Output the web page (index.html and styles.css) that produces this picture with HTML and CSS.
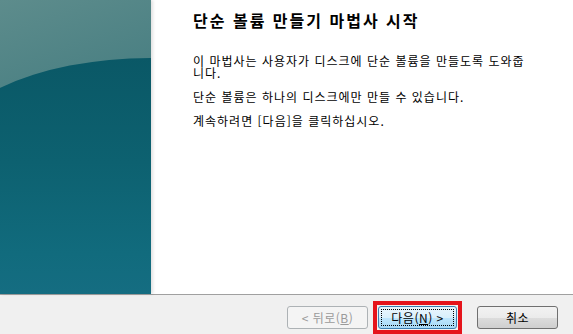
FILE: index.html
```html
<!DOCTYPE html>
<html lang="ko">
<head>
  <meta charset="UTF-8">
  <title>단순 볼륨 만들기 마법사</title>
  <link rel="stylesheet" href="styles.css">
</head>
<body>
  <div class="wizard">
    <div class="wizard-main">
      <div class="side-art"></div>
      <div class="wizard-content">
        <h1>단순 볼륨 만들기 마법사 시작</h1>
        <p>이 마법사는 사용자가 디스크에 단순 볼륨을 만들도록 도와줍니다.</p>
        <p>단순 볼륨은 하나의 디스크에만 만들 수 있습니다.</p>
        <p>계속하려면 [다음]을 클릭하십시오.</p>
      </div>
    </div>

    <div class="wizard-footer">
      <button class="btn btn-back" disabled>&lt; 뒤로(<u>B</u>)</button>
      <span class="highlight">
        <button class="btn btn-next">다음(<u>N</u>) &gt;</button>
      </span>
      <button class="btn btn-cancel">취소</button>
    </div>
  </div>
</body>
</html>
```

FILE: styles.css
```css
body {
  margin: 0;
  background-color: #fff;
  font-family: "Noto Sans CJK KR", "Noto Sans", sans-serif;
  font-size: 12px;
  color: #000;
}
.wizard {
  width: 573px;
  height: 334px;
  display: flex;
  flex-direction: column;
  overflow: hidden;
}
.wizard-main {
  height: 294px;
  display: flex;
}
.side-art {
  width: 151px;
  flex-shrink: 0;
  position: relative;
  overflow: hidden;
  background: linear-gradient(160deg, #5d8c8c 0%, #447c80 45%, #356f76 100%);
  box-shadow: 2px 0 3px rgba(0, 0, 0, 0.12);
}
.side-art::before {
  content: "";
  position: absolute;
  left: -60px;
  top: 58px;
  width: 420px;
  height: 260px;
  border-radius: 210px 210px 0 0 / 100px 100px 0 0;
  background: linear-gradient(180deg, #0a5866 0%, #0d6170 40%, #116b7d 75%, #176e84 100%);
}
.wizard-content {
  flex: 1;
  padding: 10px 42px 0 42px;
}
h1 {
  margin: 0 0 25px;
  font-size: 16px;
  font-weight: bold;
  line-height: 20px;
  letter-spacing: 2px;
}
p {
  margin: 0 0 12px;
  line-height: 12px;
  letter-spacing: 1px;
}
.wizard-footer {
  height: 39px;
  border-top: 1px solid #a0a0a0;
  background-color: #f0f0f0;
  display: flex;
  justify-content: flex-end;
  align-items: flex-start;
  padding-right: 15px;
}
.btn {
  width: 81px;
  height: 23px;
  margin-top: 11px;
  padding: 0;
  border-radius: 3px;
  font-family: inherit;
  font-size: 12px;
  line-height: 20px;
  letter-spacing: 0.5px;
  color: #000;
}
.btn-back {
  background-color: #f4f4f4;
  border: 1px solid #adb2b5;
  color: #9a9a9a;
}
.highlight {
  margin: 6px 15px 0 5px;
  padding: 1px;
  border: 4px solid #e5141b;
  display: flex;
}
.highlight .btn {
  width: 79px;
  margin-top: 0;
}
.btn-next {
  border: 1px solid #3c7fb1;
  background: linear-gradient(180deg, #eaf6fd 0%, #d9f0fc 50%, #bee6fd 50%, #a7d9f5 100%);
  outline: 1px dotted #000;
  outline-offset: -4px;
}
.btn-cancel {
  border: 1px solid #707070;
  background: linear-gradient(180deg, #f2f2f2 0%, #ebebeb 50%, #dddddd 50%, #cfcfcf 100%);
}
```
